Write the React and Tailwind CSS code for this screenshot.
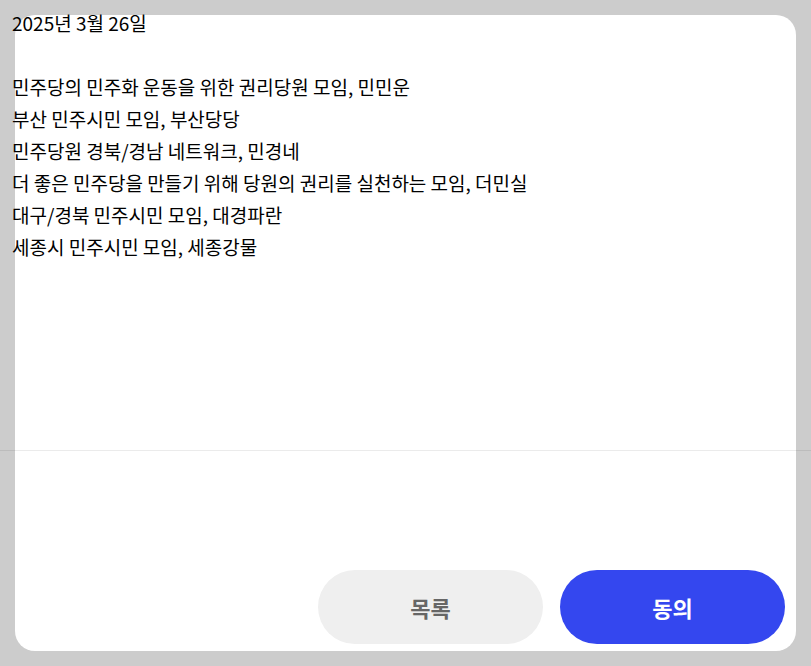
export default function App() {
  const groups = [
    '민주당의 민주화 운동을 위한 권리당원 모임, 민민운',
    '부산 민주시민 모임, 부산당당',
    '민주당원 경북/경남 네트워크, 민경네',
    '더 좋은 민주당을 만들기 위해 당원의 권리를 실천하는 모임, 더민실',
    '대구/경북 민주시민 모임, 대경파란',
    '세종시 민주시민 모임, 세종강물',
  ];

  return (
    <div
      className="relative h-[666px] overflow-hidden bg-[#cccccc] p-[15px]"
      style={{ fontFamily: '"Noto Sans CJK KR", "Noto Sans", sans-serif' }}
    >
      <div className="flex h-[636px] flex-col rounded-[20px] bg-white">
        <div className="-ml-[3px] -mt-2 text-[19px] leading-[32px] text-black">
          <p>2025년 3월 26일</p>
          <p>&nbsp;</p>
          {groups.map(g => (
            <p key={g}>{g}</p>
          ))}
        </div>

        <div className="flex-1" />

        <div className="flex justify-end gap-[17px] pb-[7px] pr-[11px]">
          <button className="h-[74px] w-[225px] rounded-full bg-[#efefef] text-[22px] font-bold text-[#666666]">
            목록
          </button>
          <button className="h-[74px] w-[225px] rounded-full bg-[#3447ef] text-[22px] font-bold text-white">
            동의
          </button>
        </div>
      </div>

      <div className="absolute inset-x-0 top-[450px] h-px bg-black/[0.08]" />
    </div>
  );
}
